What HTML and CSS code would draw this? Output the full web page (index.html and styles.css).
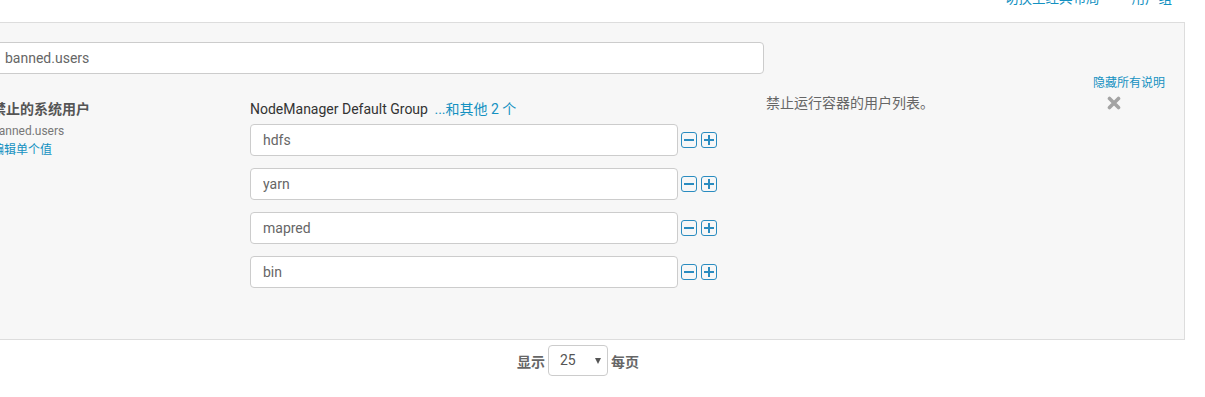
FILE: index.html
```html
<!DOCTYPE html>
<html lang="zh-CN">

<head>
    <meta charset="UTF-8">
    <title>配置 - banned.users</title>
    <link rel="stylesheet" href="styles.css">
</head>

<body>
    <div class="page">
        <div class="topbar">
            <a href="#">切换至经典布局</a>
            <a href="#">用户组</a>
        </div>

        <div class="panel">
            <input class="filter" type="text" value="banned.users">

            <div class="config-row">
                <div class="label-col">
                    <div class="label">禁止的系统用户</div>
                    <div class="prop-name">banned.users</div>
                    <a class="edit-link" href="#">编辑单个值</a>
                </div>

                <div class="value-col">
                    <div class="group-title">NodeManager Default Group <a href="#">...和其他 2 个</a></div>
                    <div class="value-item">
                        <input class="value-input" type="text" value="hdfs">
                        <span class="btn-icon minus"></span>
                        <span class="btn-icon plus"></span>
                    </div>
                    <div class="value-item">
                        <input class="value-input" type="text" value="yarn">
                        <span class="btn-icon minus"></span>
                        <span class="btn-icon plus"></span>
                    </div>
                    <div class="value-item">
                        <input class="value-input" type="text" value="mapred">
                        <span class="btn-icon minus"></span>
                        <span class="btn-icon plus"></span>
                    </div>
                    <div class="value-item">
                        <input class="value-input" type="text" value="bin">
                        <span class="btn-icon minus"></span>
                        <span class="btn-icon plus"></span>
                    </div>
                </div>

                <div class="desc-col">禁止运行容器的用户列表。</div>

                <div class="hide-col">
                    <a href="#">隐藏所有说明</a>
                    <svg class="close-icon" width="14" height="14" viewBox="0 0 14 14">
                        <path d="M2.5 2.5 L11.5 11.5 M11.5 2.5 L2.5 11.5" stroke="#a3a3a3" stroke-width="3.6"
                            stroke-linecap="round" />
                    </svg>
                </div>
            </div>
        </div>

        <div class="pager">
            <span>显示</span>
            <div class="select">25<span class="caret"></span></div>
            <span>每页</span>
        </div>
    </div>
</body>

</html>
```

FILE: styles.css
```css
* {
    margin: 0;
    padding: 0;
    box-sizing: border-box;
}

body {
    font-family: Roboto, "Noto Sans CJK SC", sans-serif;
    font-size: 14px;
    color: #333;
    background: #fff;
    overflow: hidden;
}

a {
    color: #1491c1;
    text-decoration: none;
}

.page {
    margin-left: -29px;
    width: 1214px;
}

.topbar {
    height: 22px;
    display: flex;
    justify-content: flex-end;
    gap: 32px;
    padding-right: 13px;
    overflow: hidden;
}

.topbar a {
    font-size: 13.5px;
    line-height: 20px;
    margin-top: -12px;
}

.panel {
    background: #f7f7f7;
    border: 1px solid #ddd;
    border-left: none;
    height: 318px;
    padding: 19px 0 0 21px;
}

.filter {
    display: block;
    width: 772px;
    height: 32px;
    border: 1px solid #ccc;
    border-radius: 4px;
    background: #fff;
    padding: 0 12px;
    font-family: inherit;
    font-size: 14px;
    color: #666;
}

.config-row {
    display: grid;
    grid-template-columns: 258px 516px 327px 1fr;
}

.label-col {
    padding-top: 25px;
}

.label {
    font-weight: bold;
    line-height: 20px;
    color: #555;
}

.prop-name {
    font-size: 12px;
    line-height: 20px;
    padding-top: 2px;
    color: #777;
}

.edit-link {
    display: block;
    font-size: 12px;
    line-height: 18px;
}

.value-col {
    padding-top: 25px;
}

.group-title {
    line-height: 20px;
    margin-bottom: 5px;
    color: #333;
}

.group-title a {
    margin-left: 3px;
}

.value-item {
    display: flex;
    align-items: center;
    margin-bottom: 12px;
}

.value-input {
    width: 428px;
    height: 32px;
    border: 1px solid #ccc;
    border-radius: 4px;
    background: #fff;
    padding: 0 12px;
    font-family: inherit;
    font-size: 14px;
    color: #666;
}

.btn-icon {
    position: relative;
    width: 16px;
    height: 16px;
    border: 1.6px solid #2a8cc0;
    border-radius: 3px;
    margin-left: 3px;
}

.btn-icon + .btn-icon {
    margin-left: 4px;
}

.btn-icon::before,
.btn-icon::after {
    content: "";
    position: absolute;
    background: #2a8cc0;
}

.btn-icon::before {
    left: 2px;
    right: 2px;
    top: 6px;
    height: 1.6px;
}

.plus::after {
    top: 2px;
    bottom: 2px;
    left: 6px;
    width: 1.6px;
}

.desc-col {
    padding-top: 19px;
    line-height: 20px;
    color: #666;
}

.hide-col {
    padding-top: 1px;
    white-space: nowrap;
}

.hide-col a {
    display: block;
    font-size: 12px;
    line-height: 16px;
}

.close-icon {
    display: block;
    margin: 5px 0 0 14px;
}

.pager {
    display: flex;
    justify-content: center;
    align-items: center;
    padding-top: 5px;
    color: #666;
    font-weight: 600;
}

.select {
    position: relative;
    width: 60px;
    height: 31px;
    margin: 0 3px;
    border: 1px solid #ccc;
    border-radius: 4px;
    background: #fff;
    padding-left: 11px;
    line-height: 29px;
    font-weight: normal;
    color: #555;
}

.caret {
    position: absolute;
    right: 6px;
    top: 12px;
    border-left: 3.5px solid transparent;
    border-right: 3.5px solid transparent;
    border-top: 6px solid #555;
}
```
